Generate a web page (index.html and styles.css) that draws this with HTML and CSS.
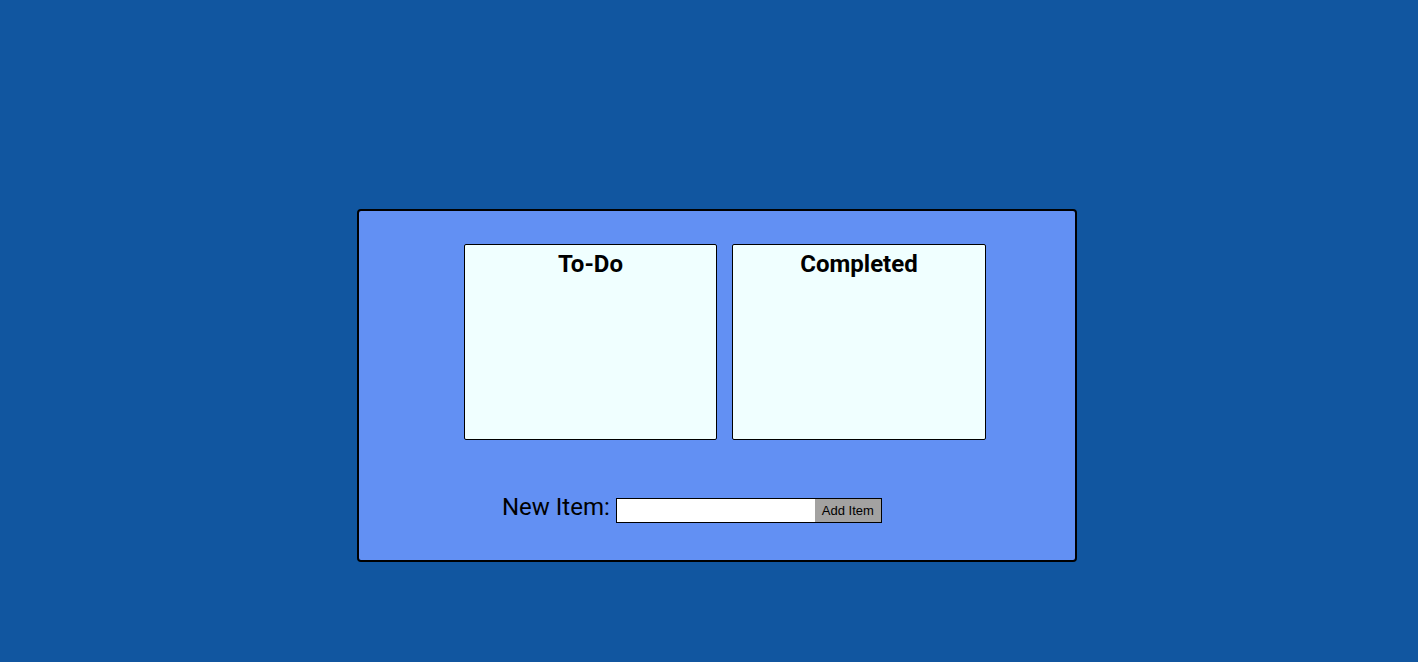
FILE: index.html
```html
<!DOCTYPE html>
<html>
<head>
<meta charset="utf-8">
<link rel="stylesheet" href="styles.css">
</head>
<body>
<div class="page">
  <div class="app">
    <div class="lists">
      <div class="list"><h2 class="list-title">To-Do</h2></div>
      <div class="list list-wide"><h2 class="list-title">Completed</h2></div>
    </div>
    <div class="new-row">
      <label class="new-label" for="item">New Item:</label>
      <div class="entry">
        <input class="entry-input" id="item" type="text">
        <button class="entry-btn" type="button">Add Item</button>
      </div>
    </div>
  </div>
</div>
</body>
</html>
```
FILE: styles.css
```css
html, body {
  margin: 0;
  padding: 0;
  background: #1156a0;
  font-family: Roboto, "Liberation Sans", sans-serif;
}
.page {
  height: 662px;
  padding-top: 209px;
  box-sizing: border-box;
  display: flex;
  flex-direction: column;
  padding-left: 357px;
}
.app {
  width: 720px;
  height: 353px;
  box-sizing: border-box;
  border: 2px solid #000;
  border-radius: 4px;
  background: #6290f3;
  padding: 33px 0 0 105px;
}
.lists {
  display: flex;
  gap: 15px;
}
.list {
  width: 253px;
  height: 196px;
  box-sizing: border-box;
  border: 1px solid #000;
  border-radius: 2px;
  background: #f0ffff;
}
.list-wide {
  width: 254px;
}
.list-title {
  margin: 0;
  padding-top: 4.5px;
  text-align: center;
  font-size: 24px;
  font-weight: 700;
  line-height: 28px;
  color: #000;
}
.new-row {
  display: flex;
  align-items: flex-end;
  margin-top: 53px;
  margin-left: 38px;
  gap: 6px;
}
.new-label {
  font-size: 24px;
  line-height: 28px;
  margin-bottom: 2px;
  color: #000;
}
.entry {
  display: flex;
  height: 25px;
  box-sizing: border-box;
  border: 1px solid #000;
}
.entry-input {
  width: 198px;
  border: 0;
  margin: 0;
  padding: 0 2px;
  box-sizing: border-box;
  background: #fff;
  outline: none;
}
.entry-btn {
  width: 66px;
  border: 0;
  margin: 0;
  padding: 0;
  background: #a3a2a1;
  font-family: "Liberation Sans", Arial, sans-serif;
  font-size: 13px;
  color: #000;
}
```
